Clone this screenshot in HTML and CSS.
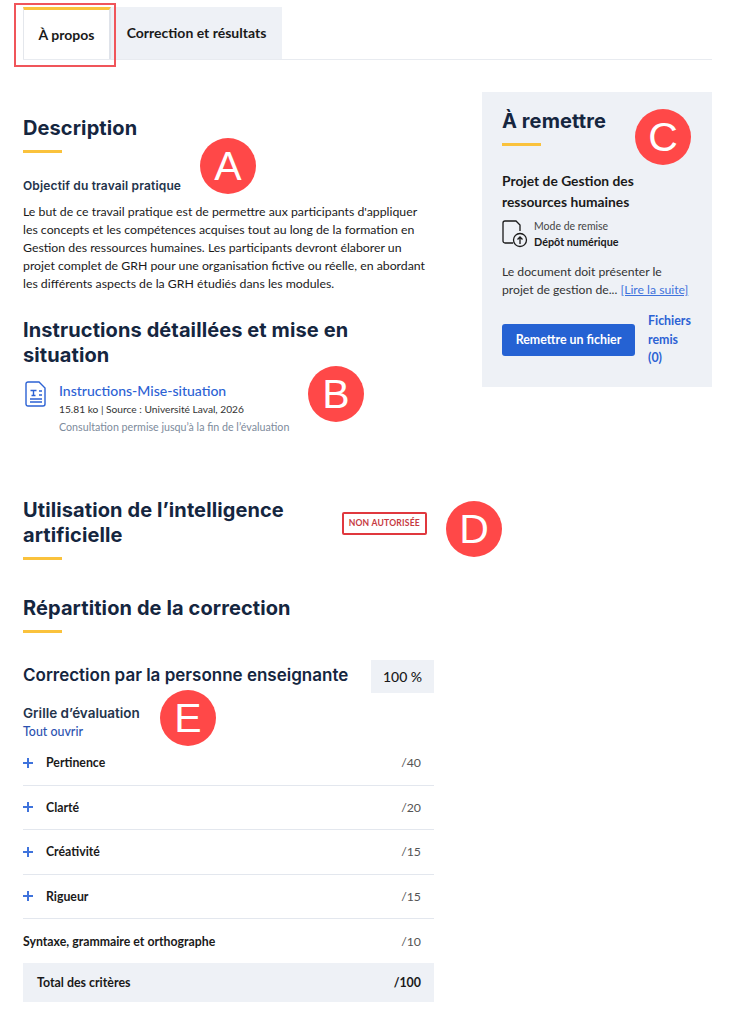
FILE: index.html
```html
<!DOCTYPE html>
<html lang="fr">
<head>
    <meta charset="UTF-8">
    <meta name="viewport" content="width=device-width, initial-scale=1.0">
    <title>À propos</title>
    <link rel="stylesheet" href="styles.css">
</head>
<body>

<div class="page">
    <div class="tabs">
        <div class="tab active">À propos</div>
        <div class="tab">Correction et résultats</div>
    </div>
    <div class="tab-outline"></div>

    <div class="columns">
        <div class="main">
            <h2 class="title">Description</h2>
            <div class="rule"></div>
            <h4 class="objective">Objectif du travail pratique</h4>
            <p class="intro">Le but de ce travail pratique est de permettre aux participants d'appliquer les concepts et les compétences acquises tout au long de la formation en Gestion des ressources humaines. Les participants devront élaborer un projet complet de GRH pour une organisation fictive ou réelle, en abordant les différents aspects de la GRH étudiés dans les modules.</p>

            <h2 class="title instructions-title">Instructions détaillées et mise en situation</h2>
            <div class="file">
                <svg class="file-icon" width="22" height="26" viewBox="0 0 22 26" fill="none" stroke="#2c62d4" stroke-width="1.4">
                    <path d="M3 1h11l6 6v16a2 2 0 0 1-2 2H3a2 2 0 0 1-2-2V3a2 2 0 0 1 2-2z"/>
                    <path d="M5.500 9.500h6M8.500 9.500v5M6.500 14.500h4M14 10h3M14 14h3M5 18h12M5 21h12"/>
                </svg>
                <div>
                    <a class="file-name">Instructions-Mise-situation</a>
                    <div class="file-meta">15.81 ko | Source : Université Laval, 2026</div>
                    <div class="file-note">Consultation permise jusqu’à la fin de l’évaluation</div>
                </div>
            </div>

            <div class="ai-row">
                <h2 class="title">Utilisation de l’intelligence artificielle</h2>
                <span class="badge">NON AUTORISÉE</span>
            </div>
            <div class="rule"></div>

            <h2 class="title split-title">Répartition de la correction</h2>
            <div class="rule"></div>

            <div class="correction">
                <h3>Correction par la personne enseignante</h3>
                <div class="percent">100 %</div>
            </div>
            <h4 class="grid-title">Grille d’évaluation</h4>
            <a class="open-all">Tout ouvrir</a>

            <div class="criteria">
                <div class="criterion"><span class="plus"></span><span class="name">Pertinence</span><span class="score">/40</span></div>
                <div class="criterion"><span class="plus"></span><span class="name">Clarté</span><span class="score">/20</span></div>
                <div class="criterion"><span class="plus"></span><span class="name">Créativité</span><span class="score">/15</span></div>
                <div class="criterion"><span class="plus"></span><span class="name">Rigueur</span><span class="score">/15</span></div>
                <div class="criterion plain"><span class="name">Syntaxe, grammaire et orthographe</span><span class="score">/10</span></div>
            </div>
            <div class="total"><span>Total des critères</span><span>/100</span></div>
        </div>

        <div class="side">
            <h2 class="title">À remettre</h2>
            <div class="rule"></div>
            <div class="project">Projet de Gestion des ressources humaines</div>
            <div class="mode">
                <svg width="28" height="28" viewBox="0 0 28 28" fill="none" stroke="#1a1a1a" stroke-width="1.3">
                    <path d="M11 23H3a2 2 0 0 1-2-2V3a2 2 0 0 1 2-2h11l4 4v6"/>
                    <circle cx="18" cy="20" r="6.500"/>
                    <path d="M18 24v-7M15.500 19.500 18 17l2.500 2.500"/>
                </svg>
                <div>
                    <div class="mode-label">Mode de remise</div>
                    <div class="mode-value">Dépôt numérique</div>
                </div>
            </div>
            <p class="side-text">Le document doit présenter le projet de gestion de... <a>[Lire la suite]</a></p>
            <div class="actions">
                <button class="submit-btn">Remettre un fichier</button>
                <a class="files-link">Fichiers remis (0)</a>
            </div>
        </div>
    </div>

    <div class="marker marker-a">A</div>
    <div class="marker marker-b">B</div>
    <div class="marker marker-c">C</div>
    <div class="marker marker-d">D</div>
    <div class="marker marker-e">E</div>
</div>

</body>
</html>
```

FILE: styles.css
```css
body {
    font-family: Lato, Arial, sans-serif;
    margin: 0;
    padding: 0;
    color: #1a1a1a;
    background-color: #fff;
}
.page {
    position: relative;
    height: 1024px;
    overflow: hidden;
    box-sizing: border-box;
    padding: 7px 38px 0 23px;
}
.tabs {
    display: flex;
    height: 52px;
    border-bottom: 1px solid #e8ebf0;
}
.tab {
    display: flex;
    align-items: center;
    justify-content: center;
    width: 171px;
    height: 52px;
    box-sizing: border-box;
    padding-bottom: 1px;
    font-size: 14px;
    font-weight: 700;
    background-color: #eef1f6;
}
.tab.active {
    width: 88px;
    background-color: #fff;
    border-top: 3px solid #fac23c;
    border-left: 1px solid #e4e7ec;
    border-right: 2px solid #dfe3ea;
}
.tab-outline {
    position: absolute;
    left: 14px;
    top: 3px;
    width: 98px;
    height: 60px;
    border: 2px solid #f0555a;
}
.columns {
    display: flex;
    gap: 48px;
    align-items: flex-start;
}
.main {
    width: 411px;
    padding-top: 56px;
}
.title {
    margin: 0;
    font-family: Inter, Arial, sans-serif;
    font-size: 20px;
    line-height: 25px;
    font-weight: 700;
    letter-spacing: 0.1px;
    color: #15263f;
}
.rule {
    width: 39px;
    height: 3px;
    margin-top: 9px;
    background-color: #fac23c;
}
.objective {
    margin: 24px 0 0;
    font-family: Inter, Arial, sans-serif;
    font-size: 12px;
    line-height: 18px;
    font-weight: 600;
    letter-spacing: 0.15px;
    color: #24344c;
}
.intro {
    margin: 8px 0 0;
    font-size: 12.3px;
    line-height: 18px;
}
.instructions-title {
    margin-top: 25px;
}
.file {
    display: flex;
    gap: 12px;
    margin-top: 13px;
}
.file-icon {
    margin-left: 2px;
    flex: none;
}
.file-name {
    display: block;
    font-size: 14px;
    line-height: 20px;
    font-weight: 500;
    color: #2c62d4;
}
.file-meta {
    font-size: 10.2px;
    line-height: 17px;
    color: #333;
}
.file-note {
    font-size: 10.7px;
    line-height: 17px;
    color: #7d8b9c;
}
.ai-row {
    display: flex;
    align-items: center;
    justify-content: space-between;
    margin-top: 63px;
    padding-right: 7px;
}
.ai-row .title {
    width: 300px;
}
.badge {
    padding: 4px 5px;
    border: 2px solid #e0383e;
    border-radius: 2px;
    font-size: 8.6px;
    line-height: 11px;
    font-weight: 700;
    letter-spacing: 0.2px;
    color: #c73a3f;
}
.split-title {
    margin-top: 36px;
}
.correction {
    display: flex;
    align-items: center;
    justify-content: space-between;
    margin-top: 27px;
}
.correction h3 {
    margin: 0;
    padding-bottom: 4px;
    font-family: Inter, Arial, sans-serif;
    font-size: 17px;
    font-weight: 600;
    color: #15263f;
}
.percent {
    width: 63px;
    height: 33px;
    line-height: 33px;
    text-align: center;
    font-size: 14px;
    font-weight: 500;
    background-color: #eef1f6;
}
.grid-title {
    margin: 10px 0 0;
    font-family: Inter, Arial, sans-serif;
    font-size: 13.5px;
    line-height: 20px;
    font-weight: 600;
    color: #24344c;
}
.open-all {
    display: block;
    font-size: 12.4px;
    line-height: 18px;
    font-weight: 500;
    color: #2c52b0;
}
.criterion {
    display: flex;
    align-items: center;
    height: 43.5px;
    border-bottom: 1px solid #e3e7ee;
    font-size: 12.3px;
}
.criterion.plain {
    height: 44px;
    border-bottom: none;
}
.plus {
    width: 10px;
    height: 10px;
    margin-right: 13px;
    background:
        linear-gradient(#3f73dc, #3f73dc) center / 10px 2px no-repeat,
        linear-gradient(#3f73dc, #3f73dc) center / 2px 10px no-repeat;
}
.name {
    font-weight: 700;
    flex: 1;
}
.score {
    margin-right: 13px;
    color: #555;
}
.total {
    display: flex;
    justify-content: space-between;
    align-items: center;
    height: 39px;
    padding: 0 13px 0 14px;
    background-color: #eef1f6;
    font-size: 12.4px;
    font-weight: 700;
}
.side {
    width: 190px;
    height: 254px;
    margin-top: 32px;
    padding: 17px 20px 24px;
    background-color: #eef1f6;
}
.project {
    margin-top: 24px;
    font-size: 13.8px;
    line-height: 21px;
    font-weight: 700;
}
.mode {
    display: flex;
    align-items: center;
    gap: 4px;
    margin-top: 7px;
}
.mode-label {
    font-size: 10.5px;
    line-height: 15px;
    color: #444;
}
.mode-value {
    font-size: 10.8px;
    line-height: 15px;
    font-weight: 700;
}
.side-text {
    margin: 14px 0 0;
    font-size: 12.2px;
    line-height: 18px;
    color: #333;
}
.side-text a {
    color: #3f73dc;
    text-decoration: underline;
}
.actions {
    display: flex;
    align-items: center;
    gap: 13px;
    margin-top: 13px;
}
.submit-btn {
    flex: none;
    width: 133px;
    height: 32px;
    padding: 0;
    border: none;
    border-radius: 3px;
    background-color: #2562d3;
    color: #fff;
    font-family: inherit;
    font-size: 12.4px;
    font-weight: 700;
}
.files-link {
    font-size: 12.4px;
    line-height: 18.500px;
    font-weight: 700;
    color: #2c62d4;
}
.marker {
    position: absolute;
    width: 56px;
    height: 56px;
    border-radius: 50%;
    background-color: #ff4848;
    color: #fff;
    font-family: "Liberation Sans", Arial, sans-serif;
    font-size: 41px;
    line-height: 56px;
    text-align: center;
}
.marker-a { left: 200px; top: 138px; }
.marker-b { left: 308px; top: 366px; }
.marker-c { left: 635px; top: 109px; }
.marker-d { left: 446px; top: 501px; }
.marker-e { left: 160px; top: 690px; }
```
